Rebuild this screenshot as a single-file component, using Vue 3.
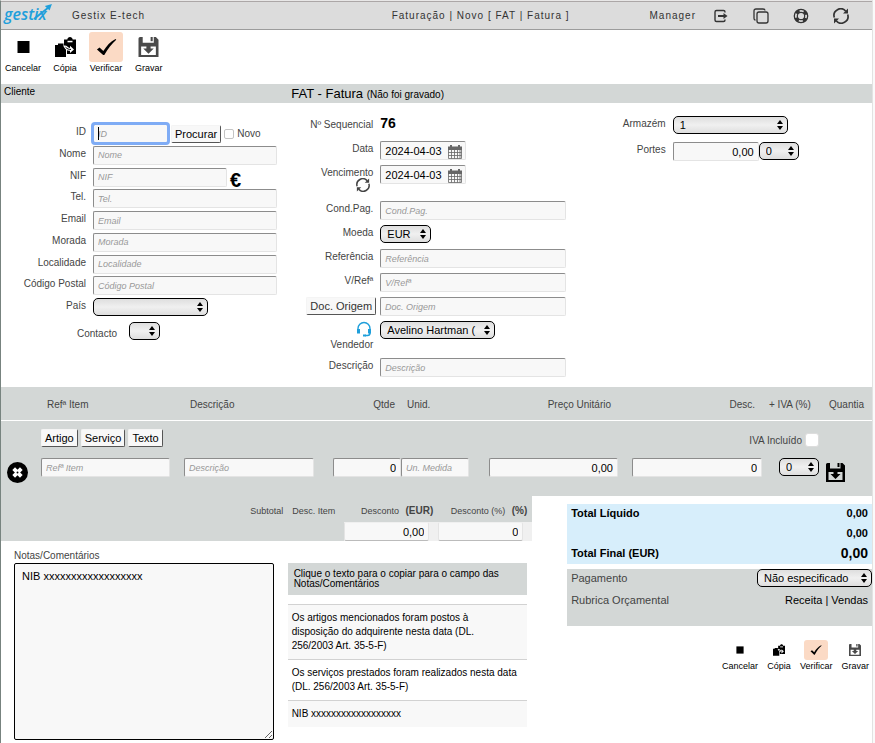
<template>
  <div class="page">
    <!-- icon sprite -->
    <svg class="sprite" aria-hidden="true">
      <symbol id="i-stop" viewBox="0 0 20 20">
        <path d="M4 4h12v12H4z" />
      </symbol>
      <symbol id="i-copia" viewBox="0 0 21 20">
        <path d="M0 8h3V6.500h5.500V8H11v12H0z" />
        <path d="M9 2.500h3.300C12.500 1 13.600 0 15 0s2.500 1 2.700 2.500H21V17h-9v-4.500L9 9.500z" />
        <path d="M12.500 3.800h5v1.500h-5z" fill="#fff" />
        <path
          d="M8 8.200l3.300 0.600c1.500 1 2.500 2 3.700 2.200V8.700l4 3.700-4 3.600v-2.200c-3 0-4.800-1-7-5.600z"
          fill="#fff"
        />
        <path d="M10.500 10.200c2 2 3.500 2.300 5.500 2.200" fill="none" stroke="currentColor" />
      </symbol>
      <symbol id="i-check" viewBox="0 0 22 20">
        <path d="M1 12.500l2.700-2 4 3.800C11 8.500 15 4.500 20.500 1.500l.7.800C16.500 6.500 12.500 11.500 8.700 18.500H7.500z" />
      </symbol>
      <symbol id="i-disk" viewBox="0 0 19 19">
        <path
          fill-rule="evenodd"
          d="M0 1.500Q0 0 1.500 0H4v5.500h10.500V0h2L19 2.500V19H0zM2.500 9v8h14V9z"
        />
        <path d="M11.500 0h2v4h-2z" />
        <path d="M7.500 7.500h4V11h3l-5 5-5-5h3z" />
      </symbol>
      <symbol id="i-sync" viewBox="0 0 16 16">
        <g fill="none" stroke="currentColor" stroke-width="1.700">
          <path d="M1.300 9.500A6.700 6.700 0 0 1 12.800 3.200" />
          <path d="M14.700 6.500A6.700 6.700 0 0 1 3.200 12.800" />
        </g>
        <path d="M15 0.500V5.500H10zM1 15.500V10.500H6z" />
      </symbol>
      <symbol id="i-calendar" viewBox="0 0 14 14">
        <path d="M0 1.500h2V0h2v1.500h6V0h2v1.500h2V5H0z" />
        <path
          d="M.5 5v8.500h13V5M.5 7.500h13M.5 10.500h13M3.500 5v8.500M6.500 5v8.500M9.500 5v8.500M12 5v8.500"
          fill="none"
          stroke="currentColor"
          stroke-width=".8"
        />
      </symbol>
      <symbol id="i-arrows" viewBox="0 0 6 10">
        <path d="M3 0l3 4H0zM3 10L0 6h6z" />
      </symbol>
    </svg>

    <header class="topbar">
      <a class="logo" href="#">
        gestix
        <svg class="logo-arrow" viewBox="0 0 20 17">
          <path d="M1 16L16 4" stroke="#1f9fdb" stroke-width="2" fill="none" />
          <path d="M20 0l-2.500 7-5-5z" fill="#1f9fdb" />
        </svg>
      </a>
      <span class="company">Gestix E-tech</span>
      <span class="crumbs">Faturação | Novo [ FAT | Fatura ]</span>
      <nav class="topnav">
        <span class="user">Manager</span>
        <button type="button" aria-label="Sair">
          <svg viewBox="0 0 16 16" fill="none" stroke="currentColor" stroke-width="1.400">
            <path d="M12 4.500V4q0-1.500-1.500-1.500h-7Q2 2.500 2 4v8q0 1.500 1.500 1.500h7Q12 13.500 12 12v-.5" />
            <path d="M5 8h6" stroke-width="2" />
            <path d="M10.500 5l4 3-4 3z" fill="currentColor" stroke="none" />
          </svg>
        </button>
        <button type="button" aria-label="Nova janela">
          <svg viewBox="0 0 16 16" fill="none" stroke="currentColor" stroke-width="1.300">
            <rect x="4" y="4" width="11" height="11" rx="2" />
            <path d="M2.500 12Q1 12 1 10V3q0-2 2-2h7q2 0 2 1.500" />
          </svg>
        </button>
        <button type="button" aria-label="Ajuda">
          <svg viewBox="0 0 16 16" fill="none" stroke="currentColor">
            <circle cx="8" cy="8" r="6.700" stroke-width="1.300" />
            <circle cx="8" cy="8" r="3.700" stroke-width="1.200" />
            <circle cx="8" cy="8" r="5.300" stroke-width="3" stroke-dasharray="4 4.325" stroke-dashoffset="-2.160" />
          </svg>
        </button>
        <button type="button" aria-label="Atualizar">
          <svg><use href="#i-sync" /></svg>
        </button>
      </nav>
    </header>

    <div class="toolbar">
      <button v-for="a in actions" :key="a.icon" type="button" :class="['action', a.icon]">
        <span class="action-icon"><svg><use :href="'#i-' + a.icon" /></svg></span>
        {{ a.label }}
      </button>
    </div>

    <div class="section-bar">
      <span>Cliente</span>
      <h1>FAT - Fatura <small>(Não foi gravado)</small></h1>
    </div>

    <form class="form" @submit.prevent>
      <div class="col client">
        <div class="row">
          <label for="id">ID</label>
          <div class="field">
            <span class="id-box">
              <input id="id" v-model="client.id" class="focused" type="text" placeholder="ID" />
              <i class="caret"></i>
            </span>
            <button class="btn" type="button">Procurar</button>
            <input id="novo" class="tick" type="checkbox" />
            <label for="novo">Novo</label>
          </div>
        </div>
        <div v-for="f in clientFields" :key="f.id" class="row">
          <label :for="f.id">{{ f.label }}</label>
          <div class="field">
            <input :id="f.id" v-model="client[f.id]" type="text" :class="f.id" :placeholder="f.label" />
            <button v-if="f.id === 'nif'" class="euro" type="button">€</button>
          </div>
        </div>
        <div class="row">
          <label for="pais">País</label>
          <span class="select wide">
            <select id="pais"><option></option></select>
            <svg><use href="#i-arrows" /></svg>
          </span>
        </div>
      </div>

      <div class="col document">
        <div class="row">
          <span class="label">Nº Sequencial</span>
          <strong class="sequence">76</strong>
        </div>
        <div class="row">
          <label for="data">Data</label>
          <span class="date">
            <input id="data" v-model="doc.data" type="text" />
            <svg><use href="#i-calendar" /></svg>
          </span>
        </div>
        <div class="row tall">
          <label for="vencimento">
            Vencimento
            <svg class="sync"><use href="#i-sync" /></svg>
          </label>
          <span class="date">
            <input id="vencimento" v-model="doc.vencimento" type="text" />
            <svg><use href="#i-calendar" /></svg>
          </span>
        </div>
        <div class="row">
          <label for="cond">Cond.Pag.</label>
          <input id="cond" type="text" placeholder="Cond.Pag." />
        </div>
        <div class="row">
          <label for="moeda">Moeda</label>
          <span class="select currency">
            <select id="moeda"><option>EUR</option></select>
            <svg><use href="#i-arrows" /></svg>
          </span>
        </div>
        <div class="row">
          <label for="ref">Referência</label>
          <input id="ref" type="text" placeholder="Referência" />
        </div>
        <div class="row">
          <label for="vref">V/Refª</label>
          <input id="vref" type="text" placeholder="V/Refª" />
        </div>
        <div class="row">
          <button class="btn origin" type="button">Doc. Origem</button>
          <input type="text" placeholder="Doc. Origem" aria-label="Doc. Origem" />
        </div>
        <div class="row tall">
          <label for="vendedor">
            <svg class="headset" viewBox="0 0 16 16" fill="none" stroke="#1f9fdb">
              <path d="M2 9V7.500a6 6 0 0 1 12 0V12q0 2.500-2.500 2.500H9" stroke-width="1.400" />
              <path d="M2.500 8v4.500M13.500 8v4.500" stroke-width="3" />
              <path d="M7 14.500h3" stroke-width="2" />
            </svg>
            Vendedor
          </label>
          <span class="select wide">
            <select id="vendedor"><option>Avelino Hartman (</option></select>
            <svg><use href="#i-arrows" /></svg>
          </span>
        </div>
        <div class="row">
          <label for="descricao">Descrição</label>
          <input id="descricao" type="text" placeholder="Descrição" />
        </div>
      </div>

      <div class="col shipping">
        <div class="row">
          <label for="armazem">Armazém</label>
          <span class="select wide">
            <select id="armazem"><option>1</option></select>
            <svg><use href="#i-arrows" /></svg>
          </span>
        </div>
        <div class="row">
          <label for="portes">Portes</label>
          <input id="portes" v-model="doc.portes" class="number" type="text" />
          <span class="select short">
            <select aria-label="IVA dos portes"><option>0</option></select>
            <svg><use href="#i-arrows" /></svg>
          </span>
        </div>
      </div>

      <div class="contact">
        <label for="contacto">Contacto</label>
        <span class="select tiny">
          <select id="contacto"><option></option></select>
          <svg><use href="#i-arrows" /></svg>
        </span>
      </div>
    </form>

    <table class="items">
      <colgroup>
        <col class="c-del" />
        <col class="c-ref" />
        <col class="c-desc" />
        <col class="c-qty" />
        <col class="c-unit" />
        <col class="c-price" />
        <col class="c-disc" />
        <col class="c-vat" />
        <col class="c-save" />
      </colgroup>
      <thead>
        <tr>
          <th></th>
          <th>Refª Item</th>
          <th>Descrição</th>
          <th class="end">Qtde</th>
          <th>Unid.</th>
          <th class="end price">Preço Unitário</th>
          <th class="end disc">Desc.</th>
          <th class="vat">+ IVA (%)</th>
          <th>Quantia</th>
        </tr>
      </thead>
      <tbody>
        <tr class="kinds">
          <td></td>
          <td colspan="5">
            <div class="kind-buttons">
              <button v-for="k in kinds" :key="k" class="btn" type="button">{{ k }}</button>
            </div>
          </td>
          <td colspan="2">
            <label class="vat-included">
              IVA Incluído
              <input class="tick large" type="checkbox" />
            </label>
          </td>
          <td></td>
        </tr>
        <tr class="line">
          <td>
            <button class="icon-btn remove" type="button" aria-label="Remover">
              <svg viewBox="0 0 22 22">
                <circle cx="11" cy="11" r="11" />
                <path d="M7 7l8 8M15 7l-8 8" stroke="#fff" stroke-width="4" />
                <circle cx="11" cy="11" r="1" />
              </svg>
            </button>
          </td>
          <td class="p-ref"><input type="text" placeholder="Refª Item" aria-label="Refª Item" /></td>
          <td class="p-desc"><input type="text" placeholder="Descrição" aria-label="Descrição" /></td>
          <td><input v-model="line.qtde" class="number" type="text" aria-label="Qtde" /></td>
          <td class="p-unit"><input type="text" placeholder="Un. Medida" aria-label="Unid." /></td>
          <td class="p-ref"><input v-model="line.preco" class="number" type="text" aria-label="Preço Unitário" /></td>
          <td class="p-disc"><input v-model="line.desc" class="number" type="text" aria-label="Desc." /></td>
          <td class="p-vat">
            <span class="select short">
              <select aria-label="IVA (%)"><option>0</option></select>
              <svg><use href="#i-arrows" /></svg>
            </span>
          </td>
          <td>
            <button class="icon-btn save" type="button" aria-label="Gravar linha">
              <svg><use href="#i-disk" /></svg>
            </button>
          </td>
        </tr>
      </tbody>
    </table>

    <div class="bottom">
      <div class="left">
        <div class="discounts">
          <span class="caption">Subtotal</span>
          <span class="caption">Desc. Item</span>
          <div v-for="d in discounts" :key="d.id" class="discount">
            <label class="caption" :for="d.id">{{ d.label }} <b>{{ d.unit }}</b></label>
            <div class="discount-field">
              <input :id="d.id" v-model="d.value" class="number" type="text" />
            </div>
          </div>
        </div>
        <div class="notes">
          <div class="notes-edit">
            <label for="notas">Notas/Comentários</label>
            <textarea id="notas" v-model="notes"></textarea>
          </div>
          <div class="snippets">
            <p>Clique o texto para o copiar para o campo das Notas/Comentários</p>
            <button v-for="s in snippets" :key="s" type="button" @click="copySnippet(s)">{{ s }}</button>
          </div>
        </div>
      </div>

      <div class="right">
        <dl class="totals">
          <div><dt>Total Líquido</dt><dd>0,00</dd></div>
          <div><dt></dt><dd>0,00</dd></div>
          <div><dt>Total Final (EUR)</dt><dd class="final">0,00</dd></div>
        </dl>
        <div class="payment">
          <div>
            <label for="pagamento">Pagamento</label>
            <span class="select wide">
              <select id="pagamento"><option>Não especificado</option></select>
              <svg><use href="#i-arrows" /></svg>
            </span>
          </div>
          <div>
            <span>Rubrica Orçamental</span>
            <a href="#">Receita | Vendas</a>
          </div>
        </div>
        <div class="toolbar small">
          <button v-for="a in actions" :key="a.icon" type="button" :class="['action', a.icon]">
            <span class="action-icon"><svg><use :href="'#i-' + a.icon" /></svg></span>
            {{ a.label }}
          </button>
        </div>
      </div>
    </div>
  </div>
</template>

<script setup>
import { reactive, ref } from "vue";

const actions = [
  { icon: "stop", label: "Cancelar" },
  { icon: "copia", label: "Cópia" },
  { icon: "check", label: "Verificar" },
  { icon: "disk", label: "Gravar" },
];

const clientFields = [
  { id: "nome", label: "Nome" },
  { id: "nif", label: "NIF" },
  { id: "tel", label: "Tel." },
  { id: "email", label: "Email" },
  { id: "morada", label: "Morada" },
  { id: "localidade", label: "Localidade" },
  { id: "postal", label: "Código Postal" },
];

const kinds = ["Artigo", "Serviço", "Texto"];

const client = reactive({
  id: "",
  nome: "",
  nif: "",
  tel: "",
  email: "",
  morada: "",
  localidade: "",
  postal: "",
});

const doc = reactive({
  data: "2024-04-03",
  vencimento: "2024-04-03",
  portes: "0,00",
});

const line = reactive({ qtde: "0", preco: "0,00", desc: "0" });

const discounts = reactive([
  { id: "desconto-valor", label: "Desconto", unit: "(EUR)", value: "0,00" },
  { id: "desconto-pct", label: "Desconto (%)", unit: "(%)", value: "0" },
]);

const snippets = [
  "Os artigos mencionados foram postos à\ndisposição do adquirente nesta data (DL.\n256/2003 Art. 35-5-F)",
  "Os serviços prestados foram realizados nesta data (DL. 256/2003 Art. 35-5-F)",
  "NIB xxxxxxxxxxxxxxxxxx",
];

const notes = ref("NIB xxxxxxxxxxxxxxxxxx");

function copySnippet(text) {
  notes.value = notes.value ? notes.value + "\n" + text : text;
}
</script>

<style>
body {
  background-color: #fafafa;
}
</style>

<style scoped>
.page {
  box-sizing: border-box;
  min-height: 100vh;
  margin-right: 2px;
  border-top: 1px solid #e8e7e7;
  border-left: 1px solid #77837f;
  border-right: 1px solid #e2e2e2;
  background-color: #fff;
  font-family: "Liberation Sans", Arial, sans-serif;
  font-size: 10px;
  color: #444;
}

.page * {
  box-sizing: border-box;
}

.sprite {
  display: none;
}

svg {
  display: block;
  fill: currentColor;
}

svg[fill="none"] {
  fill: none;
}

button,
input,
select,
textarea {
  margin: 0;
  font-family: inherit;
  font-size: 11px;
  color: #000;
}

button {
  padding: 0;
  border: 0;
  background: none;
}

input[type="text"] {
  width: 100%;
  min-width: 0;
  height: 19px;
  padding: 0 4px;
  border: 1px solid;
  border-color: #8c8c8c #e4e4e4 #e4e4e4 #8c8c8c;
  border-radius: 2px;
  background-color: #f8f8f8;
}

input:placeholder-shown {
  font-size: 9px;
}

input::placeholder {
  font-style: italic;
  color: #999;
}

input.number {
  text-align: right;
}

.tick {
  appearance: none;
  width: 10px;
  height: 10px;
  border: 1px solid #c4c4c4;
  border-radius: 2px;
  background-color: #fff;
}

.tick.large {
  width: 14px;
  height: 14px;
  border-color: #ddd;
  border-radius: 3px;
}

.btn {
  height: 18px;
  padding: 0 3px;
  border: 1px solid;
  border-color: #f4f4f4 #555 #555 #f4f4f4;
  border-radius: 2px;
  background-color: #f8f8f8;
  line-height: 16px;
  white-space: nowrap;
}

.select {
  position: relative;
  display: block;
  flex: none;
}

.select select {
  display: block;
  appearance: none;
  width: 100%;
  height: 18px;
  padding: 0 6px;
  border: 1px solid #000;
  border-radius: 5px;
  background: linear-gradient(#dedede, #f0f0f0 50%, #dedede);
  line-height: 16px;
}

.select svg {
  position: absolute;
  top: 4px;
  right: 5px;
  width: 6px;
  height: 10px;
  color: #000;
  pointer-events: none;
}

.select.wide {
  width: 115px;
}

.select.currency {
  width: 51px;
}

.select.short {
  width: 40px;
}

.select.tiny {
  width: 31px;
}

/* top bar */
.topbar {
  display: flex;
  align-items: center;
  height: 29px;
  padding: 0 23px 0 3px;
  border-top: 1px solid #aca7a7;
  border-bottom: 1px solid #9c9c9c;
  background-color: #dcdcdc;
  letter-spacing: 1px;
  color: #333;
}

.logo {
  position: relative;
  width: 68px;
  height: 26px;
  font-family: "Open Sans", sans-serif;
  font-size: 16px;
  font-style: italic;
  font-weight: 600;
  line-height: 22px;
  letter-spacing: normal;
  color: #1f9fdb;
  text-decoration: none;
}

.logo-arrow {
  position: absolute;
  top: 1px;
  left: 29px;
  width: 19px;
  height: 16px;
}

.company {
  flex: 1;
}

.topnav {
  display: flex;
  align-items: center;
  gap: 24px;
  margin-left: 80px;
}

.user {
  margin-right: -7px;
}

.topnav svg {
  width: 16px;
  height: 16px;
  color: #333;
}

/* action buttons */
.toolbar {
  display: flex;
  gap: 12px;
  height: 54px;
  padding: 2px 4px 0;
}

.action {
  display: flex;
  flex-direction: column;
  align-items: center;
  font-size: 9px;
  line-height: 12px;
}

.action-icon {
  display: flex;
  align-items: center;
  justify-content: center;
  width: 24px;
  height: 30px;
  border-radius: 3px;
}

.action-icon svg {
  width: 21px;
  height: 20px;
}

.action.check .action-icon {
  width: 34px;
  background-color: #fbdac5;
}

.action.disk .action-icon {
  color: #4a4a4a;
}

.toolbar.small {
  justify-content: flex-end;
  gap: 9px;
  height: auto;
  padding: 14px 3px 0;
}

.small .action-icon {
  height: 20px;
}

.small .action-icon svg {
  width: 12px;
  height: 12px;
}

.small .action.check .action-icon {
  width: 24px;
}

/* section bar */
.section-bar {
  display: grid;
  grid-template-columns: 1fr 2fr;
  height: 19px;
  background-color: #d3d7d6;
  color: #000;
}

.section-bar span {
  padding-left: 3px;
  line-height: 16px;
}

.section-bar h1 {
  margin: 0;
  font-size: 13px;
  font-weight: normal;
  line-height: 19px;
}

.section-bar small {
  font-size: 10px;
}

/* form */
.form {
  display: grid;
  grid-template-columns: repeat(3, 1fr);
  grid-template-rows: auto 60px;
  padding-bottom: 10px;
}

.col {
  display: flex;
  flex-direction: column;
}

.row {
  display: flex;
  align-items: flex-start;
  gap: 7px;
}

.row > label,
.row > .label {
  flex: none;
  text-align: right;
  line-height: 16px;
}

.client {
  justify-content: space-between;
  grid-row: 1;
  padding: 21px 14px 0 0;
}

.client .row {
  height: 19px;
}

.client .row > label {
  width: 85px;
}

.field {
  display: flex;
  flex: 1;
  align-items: center;
  gap: 3px;
}

.id-box {
  position: relative;
  flex: none;
  width: 75px;
}

.id-box input {
  display: block;
}

.focused {
  outline: 3px solid #7facf5;
  outline-offset: -1px;
}

.caret {
  position: absolute;
  top: 3px;
  left: 5px;
  width: 1px;
  height: 13px;
  background-color: #000;
}

.field input.nif {
  width: 134px;
}

.euro {
  height: 19px;
  font-size: 20px;
  font-weight: bold;
  line-height: 24px;
}

.document {
  grid-row: 1 / 3;
  grid-column: 2;
  gap: 5px;
  padding: 14px 16px 0 0;
}

.document .row {
  min-height: 19px;
}

.document .row.tall {
  min-height: 31px;
}

.document .row > label,
.document .row > .label {
  width: 82px;
}

.sequence {
  font-size: 14px;
  line-height: 12px;
  color: #000;
}

.row > .origin {
  width: 70px;
  margin: 0 -3px 0 15px;
  color: #333;
}

.date {
  position: relative;
  width: 86px;
}

.date input {
  display: block;
}

.date svg {
  position: absolute;
  top: 4px;
  right: 4px;
  width: 14px;
  height: 14px;
  color: #666;
}

.sync,
.headset {
  width: 14px;
  height: 14px;
  margin-left: auto;
  margin-right: 3px;
}

.sync {
  margin-top: -3px;
}

.headset {
  width: 16px;
  height: 16px;
  margin-right: 1px;
}

.shipping {
  grid-row: 1;
  grid-column: 3;
  gap: 8px;
  padding-top: 13px;
}

.shipping .row > label {
  width: 84px;
}

.shipping .row > input {
  width: 86px;
  margin-right: -7px;
}

.contact {
  display: flex;
  grid-row: 2;
  grid-column: 1;
  gap: 12px;
  align-self: start;
  padding: 5px 0 0 76px;
  line-height: 24px;
}

/* item lines */
.items {
  width: 100%;
  border-collapse: collapse;
  table-layout: fixed;
  background-color: #d3d7d6;
}

.c-del {
  width: 40px;
}

.c-ref,
.c-price {
  width: 143px;
}

.c-desc {
  width: 149px;
}

.c-qty {
  width: 68px;
}

.c-unit {
  width: 88px;
}

.c-disc {
  width: 133px;
}

.c-vat {
  width: 58px;
}

.c-save {
  width: 49px;
}

.items th {
  height: 33px;
  padding: 2px 6px 0;
  border-bottom: 1px solid #fff;
  font-weight: normal;
  text-align: left;
  white-space: nowrap;
}

.items th.end {
  text-align: right;
}

.items th.price {
  padding-right: 21px;
}

.items th.disc {
  padding-right: 10px;
}

.items th.vat {
  padding: 2px 0 0 4px;
}

.items td {
  padding: 0;
  vertical-align: top;
}

.kinds td {
  height: 38px;
}

.kind-buttons {
  display: flex;
  gap: 3px;
  padding-top: 8px;
}

.vat-included {
  display: flex;
  justify-content: flex-end;
  gap: 3px;
  padding: 12px 4px 0 0;
  line-height: 16px;
}

.line td {
  height: 38px;
}

.line td.p-ref {
  padding-right: 14px;
}

.line td.p-desc {
  padding-right: 19px;
}

.line td.p-unit {
  padding-right: 20px;
}

.line td.p-disc {
  padding-right: 3px;
}

.line td.p-vat {
  padding-left: 14px;
}

.icon-btn {
  display: block;
}

.icon-btn.remove {
  margin: 4px 0 0 6px;
}

.icon-btn.remove svg {
  width: 21px;
  height: 21px;
}

.icon-btn.save {
  margin: 5px 0 0 3px;
}

.icon-btn.save svg {
  width: 19px;
  height: 19px;
}

/* discounts, notes and totals */
.bottom {
  display: flex;
  justify-content: space-between;
}

.left {
  flex: 0 0 61%;
}

.discounts {
  display: flex;
  justify-content: flex-end;
  gap: 9px;
  height: 45px;
  background-color: #d3d7d6;
}

.caption {
  display: block;
  font-size: 9px;
  line-height: 30px;
  white-space: nowrap;
}

.discount {
  width: 94px;
}

.discount + .discount {
  margin-left: -9px;
}

.discount .caption {
  height: 26px;
  padding-right: 5px;
  text-align: right;
}

.caption b {
  margin-left: 4px;
  font-size: 10px;
}

.discount-field {
  padding-right: 9px;
  background-color: #f0f0f0;
}

.discount-field input[type="text"] {
  display: block;
  border-color: #f0f0f0 #e4e4e4 #bbb #e4e4e4;
}

.notes {
  display: flex;
  gap: 14px;
  padding: 7px 5px 3px 13px;
}

.notes-edit {
  flex: 13;
}

.notes-edit label {
  display: block;
  line-height: 15px;
}

textarea {
  display: block;
  width: 100%;
  height: 177px;
  padding: 6px 7px;
  border: 1px solid #000;
  border-radius: 2px;
  background-color: #f8f8f8;
}

.snippets {
  display: flex;
  flex: 12;
  flex-direction: column;
  padding-top: 15px;
  color: #000;
}

.snippets p {
  margin: 0 0 9px;
  padding: 6px;
  height: 32px;
  background-color: #d3d7d6;
  line-height: 10px;
}

.snippets button {
  padding: 6px 4px;
  border-top: 1px solid #d2d2d2;
  font-size: 10px;
  line-height: 14px;
  text-align: left;
  white-space: pre-line;
}

.snippets button:nth-of-type(odd) {
  background-color: #f8f8f8;
}

.right {
  flex: 0 0 35%;
  padding-top: 8px;
}

.totals {
  margin: 0 0 5px;
  padding: 0 4px;
  background-color: #d7eefb;
  font-size: 11px;
  font-weight: bold;
  line-height: 18px;
  color: #000;
}

.totals div {
  display: flex;
  justify-content: space-between;
  height: 20px;
}

.totals dd {
  margin: 0;
}

.totals .final {
  font-size: 14px;
}

.payment {
  height: 57px;
  background-color: #d3d7d6;
  font-size: 11px;
}

.payment div {
  display: flex;
  justify-content: space-between;
  height: 22px;
  padding-left: 4px;
  line-height: 18px;
}

.payment a {
  padding-right: 4px;
  color: #000;
  text-decoration: none;
}
</style>
